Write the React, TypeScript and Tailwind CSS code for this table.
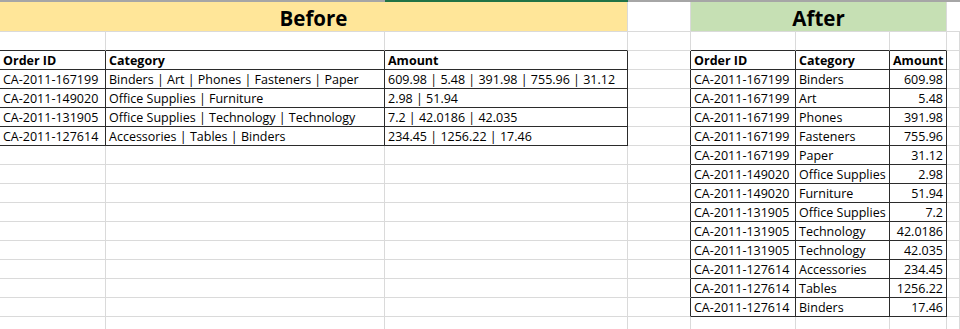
import React from 'react';

const before = [
  ['Order ID', 'Category', 'Amount'],
  ['CA-2011-167199', 'Binders | Art | Phones | Fasteners | Paper', '609.98 | 5.48 | 391.98 | 755.96 | 31.12'],
  ['CA-2011-149020', 'Office Supplies | Furniture', '2.98 | 51.94'],
  ['CA-2011-131905', 'Office Supplies | Technology | Technology', '7.2 | 42.0186 | 42.035'],
  ['CA-2011-127614', 'Accessories | Tables | Binders', '234.45 | 1256.22 | 17.46'],
];

const after = [
  ['Order ID', 'Category', 'Amount'],
  ['CA-2011-167199', 'Binders', '609.98'],
  ['CA-2011-167199', 'Art', '5.48'],
  ['CA-2011-167199', 'Phones', '391.98'],
  ['CA-2011-167199', 'Fasteners', '755.96'],
  ['CA-2011-167199', 'Paper', '31.12'],
  ['CA-2011-149020', 'Office Supplies', '2.98'],
  ['CA-2011-149020', 'Furniture', '51.94'],
  ['CA-2011-131905', 'Office Supplies', '7.2'],
  ['CA-2011-131905', 'Technology', '42.0186'],
  ['CA-2011-131905', 'Technology', '42.035'],
  ['CA-2011-127614', 'Accessories', '234.45'],
  ['CA-2011-127614', 'Tables', '1256.22'],
  ['CA-2011-127614', 'Binders', '17.46'],
];

// sheet rows 1..16 below the title row; table data starts at row 2
const inTable = (r: number, c: number) =>
  (r >= 2 && r <= 6 && c <= 2) || (r >= 2 && r <= 15 && c >= 4 && c <= 6);

function Cell({ r, c }: { r: number; c: number }) {
  const right = inTable(r, c) || inTable(r, c + 1) ? 'border-r-[#2b2b2b]' : 'border-r-[#dadada]';
  const bottom = inTable(r, c) || inTable(r + 1, c) ? 'border-b-[#2b2b2b]' : 'border-b-[#dadada]';

  let text = '';
  if (r >= 2 && r <= 6 && c <= 2) text = before[r - 2][c];
  if (r >= 2 && r <= 15 && c >= 4 && c <= 6) text = after[r - 2][c - 4];

  const isNum = c === 6 && r > 2;

  return (
    <div
      className={`h-[19px] border-r border-b ${right} ${bottom} flex items-center pt-[2px] px-[3px] overflow-hidden whitespace-nowrap ${
        isNum ? 'justify-end' : ''
      } ${r === 2 ? 'font-bold' : ''}`}
    >
      {text}
    </div>
  );
}

export default function App() {
  const rows = Array.from({ length: 16 }, (_, i) => i + 1);
  const cols = [0, 1, 2, 3, 4, 5, 6, 7];

  return (
    <div
      className="w-[960px] h-[329px] overflow-hidden bg-white text-black text-[12.5px] leading-none"
      style={{ fontFamily: '"Open Sans", "Liberation Sans", sans-serif' }}
    >
      <div className="grid grid-cols-[106px_279px_243px_63px_105px_94px_57px_1fr]">
        {/* column header edge, selected column C marked green */}
        <div className="col-span-2 h-[2px] bg-[#a6a6a6]" />
        <div className="h-[2px] bg-[#217346]" />
        <div className="col-span-5 h-[2px] bg-[#a6a6a6]" />

        {/* title row */}
        <div className="col-span-3 h-[30px] bg-[#ffe699] border-r border-b border-r-[#dadada] border-b-[#dadada] flex items-center justify-center pt-[3px] text-[20.5px] font-bold">
          Before
        </div>
        <div className="h-[30px] border-r border-b border-[#dadada]" />
        <div className="col-span-3 h-[30px] bg-[#c6e0b4] border-r border-b border-[#dadada] flex items-center justify-center pt-[3px] text-[20.5px] font-bold">
          After
        </div>
        <div className="h-[30px] border-b border-[#dadada]" />

        {rows.map((r) => cols.map((c) => <Cell key={`${r}-${c}`} r={r} c={c} />))}
      </div>
    </div>
  );
}
